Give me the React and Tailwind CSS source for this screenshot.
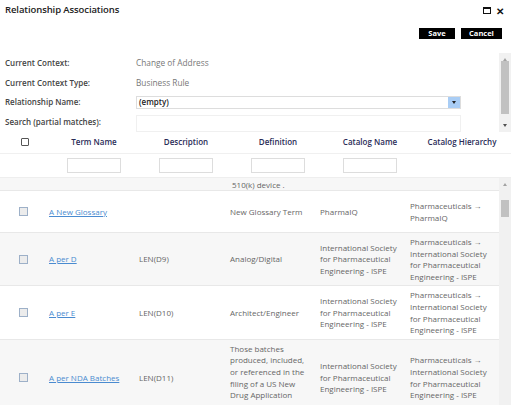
import React from "react";

const rows = [
  {
    term: "A New Glossary",
    desc: "",
    def: "New Glossary Term",
    catalog: "PharmaIQ",
    hierarchy: "Pharmaceuticals → PharmaIQ",
  },
  {
    term: "A per D",
    desc: "LEN(D9)",
    def: "Analog/Digital",
    catalog: "International Society for Pharmaceutical Engineering - ISPE",
    hierarchy: "Pharmaceuticals → International Society for Pharmaceutical Engineering - ISPE",
  },
  {
    term: "A per E",
    desc: "LEN(D10)",
    def: "Architect/Engineer",
    catalog: "International Society for Pharmaceutical Engineering - ISPE",
    hierarchy: "Pharmaceuticals → International Society for Pharmaceutical Engineering - ISPE",
  },
  {
    term: "A per NDA Batches",
    desc: "LEN(D11)",
    def: "Those batches produced, included, or referenced in the filing of a US New Drug Application (NDA) or amendment.",
    catalog: "International Society for Pharmaceutical Engineering - ISPE",
    hierarchy: "Pharmaceuticals → International Society for Pharmaceutical Engineering - ISPE",
  },
];

const ScrollBar = function ({ thumbTop, thumbHeight, showDown }) {
  return (
    <div className="relative w-[12px] shrink-0 bg-[#f1f1f1]">
      <span className="absolute left-[4px] top-[5px] h-0 w-0 border-x-[2px] border-b-[3px] border-x-transparent border-b-[#a3a3a3]" />
      <div
        className="absolute left-[2px] w-[8px] bg-[#c1c1c1]"
        style={{ top: thumbTop, height: thumbHeight }}
      />
      {showDown && (
        <span className="absolute bottom-[5px] left-[4px] h-0 w-0 border-x-[2px] border-t-[3px] border-x-transparent border-t-[#505050]" />
      )}
    </div>
  );
};

const RowCheck = () => (
  <span className="block h-[9px] w-[9px] border border-[#9db0c8] bg-[#ececec]" />
);

const App = function () {
  return (
    <div className="relative flex h-[405px] w-[511px] flex-col overflow-hidden bg-white font-['Open_Sans',sans-serif] text-[8px] text-[#333]">
      {/* title bar */}
      <div className="flex h-[20px] items-center justify-between px-[5px] pt-[1px]">
        <h1 className="text-[9.5px] font-semibold tracking-[-0.1px] text-[#222]">
          Relationship Associations
        </h1>
        <div className="flex items-center gap-[5px] pr-[2px]">
          <span className="block h-[7px] w-[8px] border border-t-2 border-[#111]" />
          <span className="text-[10px] font-bold leading-none text-[#111]">✕</span>
        </div>
      </div>

      {/* buttons */}
      <div className="flex h-[22px] items-center justify-end gap-[6px] pr-[9px] pt-[5px]">
        <button className="h-[11px] w-[36px] bg-black text-[7.5px] font-bold leading-none text-white">
          Save
        </button>
        <button className="h-[11px] w-[41px] bg-black text-[7.5px] font-bold leading-none text-white">
          Cancel
        </button>
      </div>

      {/* form */}
      <div className="mt-[11px] flex h-[79px]">
        <div className="flex flex-1 flex-col overflow-hidden pl-[5px]">
          <div className="flex h-[21px] items-center">
            <span className="w-[131px] font-semibold text-[#444]">Current Context:</span>
            <span className="text-[8.3px] text-[#777]">Change of Address</span>
          </div>
          <div className="flex h-[20px] items-center">
            <span className="w-[131px] font-semibold text-[#444]">Current Context Type:</span>
            <span className="text-[8.3px] text-[#777]">Business Rule</span>
          </div>
          <div className="flex h-[20px] items-center">
            <span className="w-[131px] font-semibold text-[#444]">Relationship Name:</span>
            <div className="flex h-[13px] w-[325px] items-center justify-between border border-[#ddd] pl-[2px]">
              <span className="font-semibold text-[#222]">(empty)</span>
              <span className="flex h-[11px] w-[12px] items-center justify-center bg-[#a9cdf5]">
                <span className="h-0 w-0 border-x-[2px] border-t-[3px] border-x-transparent border-t-[#222]" />
              </span>
            </div>
          </div>
          <div className="flex h-[20px] items-start pt-[3px]">
            <span className="w-[131px] pt-[1px] font-semibold text-[#444]">Search (partial matches):</span>
            <div className="h-[17px] w-[325px] border border-[#f0f0f0]" />
          </div>
        </div>
        <ScrollBar thumbTop={8} thumbHeight={53} showDown />
      </div>

      {/* header */}
      <div className="flex h-[22px] items-center border-b border-[#f0f0f0] pb-[2px]">
        <div className="flex w-[48px] justify-center pl-[2px]">
          <span className="block h-[8px] w-[8px] rounded-[1px] border border-[#555] bg-white" />
        </div>
        {["Term Name", "Description", "Definition", "Catalog Name", "Catalog Hierarchy"].map((h) => (
          <div key={h} className="w-[92px] text-center font-semibold text-[#2a2c57]">
            {h}
          </div>
        ))}
      </div>

      {/* filters */}
      <div className="flex h-[24px] items-center border-b border-[#eee]">
        <div className="w-[48px]" />
        {[0, 1, 2, 3].map((i) => (
          <div key={i} className="flex w-[92px] justify-center">
            <span className="block h-[15px] w-[54px] border border-[#ddd] bg-white" />
          </div>
        ))}
      </div>

      {/* body */}
      <div className="flex min-h-0 flex-1">
        <div className="flex-1 overflow-hidden">
          <div className="flex h-[13px] items-end justify-start overflow-hidden border-b border-[#e8e8e8] bg-[#f7f7f7] pl-[232px] text-[#666]">
            <span className="leading-[11px]">510(k) device .</span>
          </div>
          {rows.map((r, i) => (
            <div
              key={r.term}
              className={`flex min-h-[42px] items-center border-b border-[#e8e8e8] py-[3px] leading-[11.6px] text-[#666] ${i % 2 ? "bg-[#f7f7f7]" : "bg-white"}`}
            >
              <div className="flex w-[45px] justify-center pl-[1px]">
                <RowCheck />
              </div>
              <div className="w-[90px] px-[4px]">
                <a href="#" className="text-[#4a8bd0] underline">
                  {r.term}
                </a>
              </div>
              <div className="w-[91px] px-[4px]">{r.desc}</div>
              <div className="w-[90px] px-[4px]">{r.def}</div>
              <div className="w-[90px] px-[4px]">{r.catalog}</div>
              <div className="w-[92px] px-[4px]">{r.hierarchy}</div>
            </div>
          ))}
        </div>
        <ScrollBar thumbTop={22} thumbHeight={17} />
      </div>
    </div>
  );
};

export default App;
